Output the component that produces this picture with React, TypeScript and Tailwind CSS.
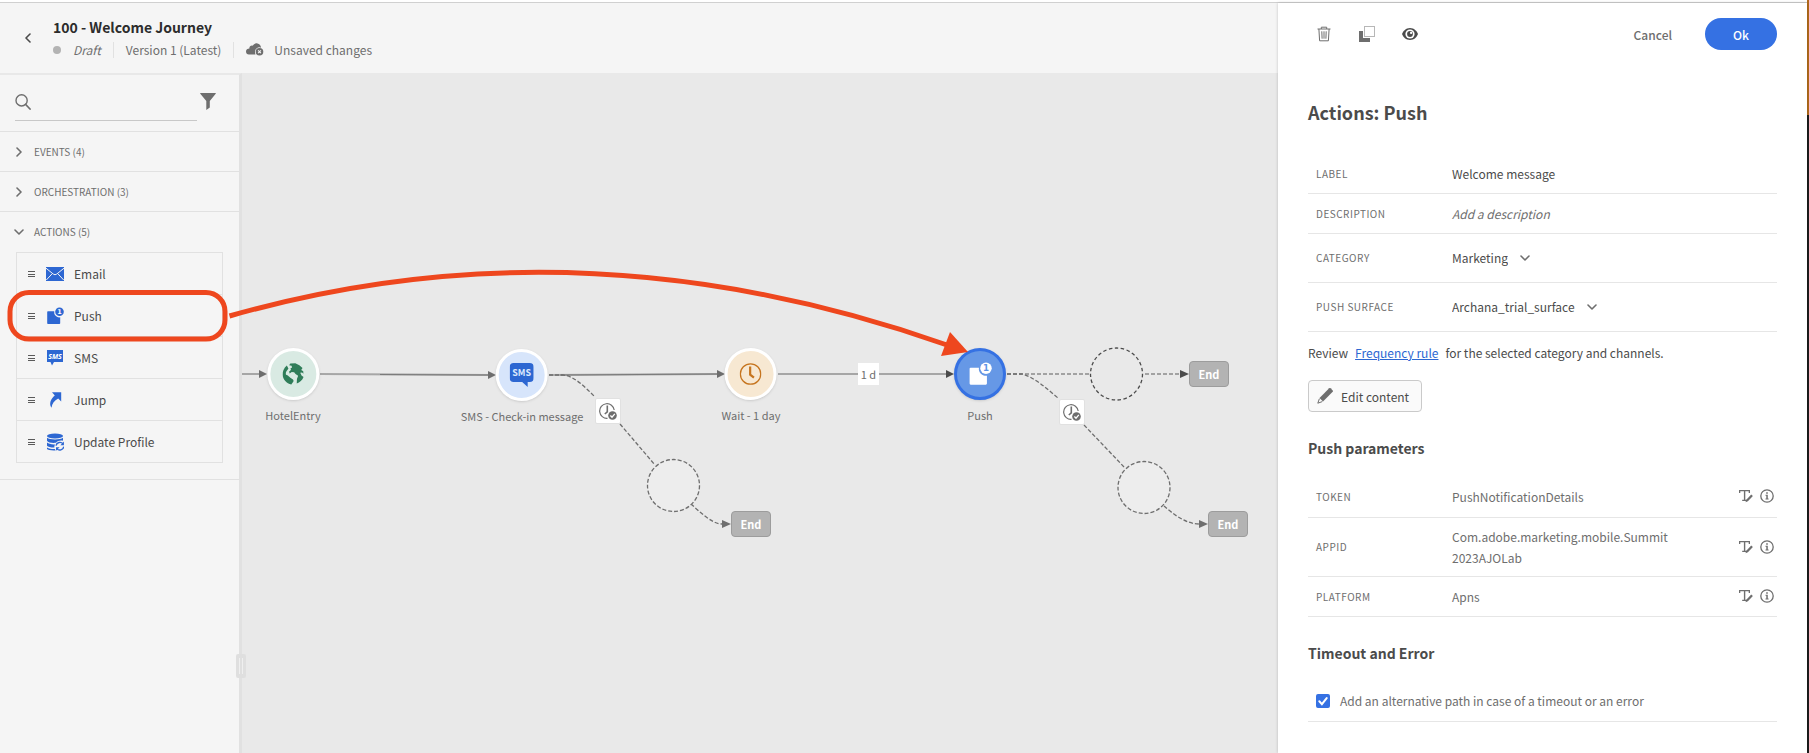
import React from "react";

type IconProps = { className?: string };

const Chevron = ({ className = "" }: IconProps) => (
  <svg viewBox="0 0 10 10" className={className} fill="none" stroke="currentColor" strokeWidth="1.6" strokeLinecap="round" strokeLinejoin="round" aria-hidden="true">
    <path d="M3 1 7 5 3 9" />
  </svg>
);

const ChevronDown = ({ className = "" }: IconProps) => (
  <svg viewBox="0 0 10 10" className={className} fill="none" stroke="currentColor" strokeWidth="1.6" strokeLinecap="round" strokeLinejoin="round" aria-hidden="true">
    <path d="M1 3 5 7 9 3" />
  </svg>
);

const SearchIcon = () => (
  <svg viewBox="0 0 16 16" className="size-4 text-[#6e6e6e]" fill="none" stroke="currentColor" strokeWidth="1.4" strokeLinecap="round" aria-hidden="true">
    <circle cx="6.6" cy="6.4" r="5.6" />
    <path d="M10.7 10.5 15 15" strokeWidth="1.8" />
  </svg>
);

const FilterIcon = () => (
  <svg viewBox="0 0 16 17" className="h-[17px] w-4 text-[#6e6e6e]" fill="currentColor" aria-hidden="true">
    <path d="M.6 0h14.8c.4 0 .6.5.3.8L9.800 8v6.600L6.300 17V8L.300.800C0 .500.200 0 .600 0Z" />
  </svg>
);

const CloudIcon = () => (
  <svg viewBox="0 0 18 13" className="h-[13px] w-[18px] text-[#6e6e6e]" fill="currentColor" aria-hidden="true">
    <path d="M9 9.2A4.4 4.4 0 0 1 15 4.700C15 2.500 13.600.800 11.400.400 9.500.100 7.600 1 6.700 2.700 5 2.200 3.200 3.500 3.400 5.400 1.500 5.400 0 6.600 0 8.400 0 10.200 1.200 11.400 2.800 11.400H9.500A5 5 0 0 1 9 9.200Z" />
    <circle cx="13.500" cy="8.800" r="3.800" />
    <path d="m12.100 7.400 2.800 2.800m0-2.800-2.800 2.800" stroke="#f5f5f5" strokeWidth="1.100" />
  </svg>
);

const EmailIcon = () => (
  <svg viewBox="0 0 18 14" className="h-[14px] w-[18px]" aria-hidden="true">
    <path fill="#2d67d2" d="M0 0h18v14H0z" />
    <path d="m0 1.200 7.300 5.900Q9 8.400 10.700 7.100L18 1.200M.3 13l5.600-6M17.700 13l-5.600-6" fill="none" stroke="#f5f5f5" strokeWidth="1" />
  </svg>
);

const PushIcon = ({ dark = true }: { dark?: boolean }) => (
  <svg viewBox="0 0 18 18" className={dark ? "size-[18px] overflow-visible" : "size-6 overflow-visible"} aria-hidden="true">
    <path fill={dark ? "#2d67d2" : "#ffffff"} d="M2 4.300h6.200a5.200 5.200 0 0 0 6 6v5.900a.8.800 0 0 1-.8.800H2a.8.800 0 0 1-.8-.8v-11a.8.800 0 0 1 .8-.9Z" />
    <circle cx="13.500" cy="4.700" r="4.300" fill={dark ? "#2d67d2" : "#ffffff"} />
    <text x="13.500" y="7.100" textAnchor="middle" fontSize="6.500" fontWeight="700" fontFamily="DejaVu Sans, sans-serif" fill={dark ? "#ffffff" : "#5f94e6"}>1</text>
  </svg>
);

const SmsIcon = () => (
  <svg viewBox="0 0 18 16" className="h-4 w-[18px]" aria-hidden="true">
    <path fill="#2d67d2" d="M1 0h16v12H8l-2 3.500L4.500 12H1z" />
    <text x="9" y="8.600" textAnchor="middle" fontSize="7" fontStyle="italic" fontWeight="700" fontFamily="Open Sans, sans-serif" fill="#ffffff">SMS</text>
  </svg>
);

const JumpIcon = () => (
  <svg viewBox="0 0 18 18" className="size-[18px]" fill="#2d67d2" aria-hidden="true">
    <path d="M6 1.200h9.200v9.300l-3-3C8.300 9.400 6.100 12.400 5.500 16.800 2.700 12.500 4.800 7.800 8.800 4.400Z" />
  </svg>
);

const ProfileIcon = () => (
  <svg viewBox="0 0 18 18" className="size-[18px]" aria-hidden="true">
    <g fill="#2d67d2">
      <ellipse cx="9" cy="3" rx="8" ry="2.500" />
      <path d="M1 4.800c2.500 2.300 13.500 2.300 16 0v3C14.500 7 11.500 8 10 9.800 6 10.200 2 9.500 1 7.700zM1 9.600c1.500 1.300 4.500 2 8 1.800-.6 1.300-.8 2-.6 3.200-3.400.1-6.400-.6-7.400-1.800zM1 14.400c2 1.200 4.800 1.600 7.800 1.500l.9 1.500C5.500 17.700 1.500 17 1 16z" />
    </g>
    <g fill="none" stroke="#2d67d2" strokeWidth="1.400">
      <path d="M10 12.600a4 4 0 0 1 7-1.800M17.800 13.600a4 4 0 0 1-7 2" />
    </g>
    <path fill="#2d67d2" d="M17.900 8.600v3.600h-3.500zM10 17.800v-3.600h3.600z" />
  </svg>
);

const TrashIcon = () => (
  <svg viewBox="0 0 14 16" className="h-4 w-[14px]" fill="none" stroke="currentColor" strokeWidth="1" aria-hidden="true">
    <path d="M.5 3h13M4.300 3V1.200h5.400V3M1.900 3l.7 11.800h8.800L12.100 3M4.800 5.300l.3 7.400M7 5.300v7.400M9.200 5.300l-.3 7.400" />
  </svg>
);

const DuplicateIcon = () => (
  <svg viewBox="0 0 16 16" className="size-4" aria-hidden="true">
    <path fill="currentColor" d="M0 5h4v7h7v4H0z" />
    <path d="M5.500.5h10v10h-10z" fill="none" stroke="currentColor" strokeDasharray="1 1" />
  </svg>
);

const EyeIcon = () => (
  <svg viewBox="0 0 16 12" className="h-3 w-4 text-[#4b4b4b]" aria-hidden="true">
    <path fill="currentColor" d="M8 0C4 0 1.100 3 0 6c1.100 3 4 6 8 6s6.900-3 8-6C14.900 3 12 0 8 0Z" />
    <circle cx="8" cy="6" r="4.600" fill="#ffffff" />
    <circle cx="8" cy="6" r="2.900" fill="currentColor" />
    <circle cx="9.100" cy="4.900" r="1.100" fill="#ffffff" />
  </svg>
);

const PencilIcon = () => (
  <svg viewBox="0 0 16 16" className="size-4 text-[#6e6e6e]" aria-hidden="true">
    <path fill="currentColor" d="M12.200.3a1 1 0 0 1 1.400 0l2.100 2.100a1 1 0 0 1 0 1.400L6 13.500 2.500 10z" />
    <path fill="none" stroke="currentColor" d="M2.400 10.700.8 15.200l4.500-1.600" />
  </svg>
);

const TextEditIcon = () => (
  <svg viewBox="0 0 14 14" className="size-[14px]" aria-hidden="true">
    <path fill="currentColor" d="M0 1h11v3H9.700V2.300H6.300v8.400H8V12H3.200v-1.300h1.700V2.300H1.300V4H0z" />
    <path fill="currentColor" d="m12.200 5.400 1.700 1.700-5 5.200-2.400.9.800-2.500z" />
  </svg>
);

const InfoIcon = () => (
  <svg viewBox="0 0 14 14" className="size-[14px]" aria-hidden="true">
    <circle cx="7" cy="7" r="6.200" fill="none" stroke="currentColor" strokeWidth="1.300" />
    <path fill="currentColor" d="M6.200 3.300h1.600v1.500H6.200zM5.500 5.800h2.300v3.600h.8v1H5.500v-1h.8V6.800h-.8z" />
  </svg>
);

const TimeoutIcon = () => (
  <svg viewBox="0 0 18 17" className="h-[17px] w-[18px] text-[#6e6e6e]" aria-hidden="true">
    <path d="M8.500 15.300A7.300 7.300 0 1 1 15.200 7" fill="none" stroke="currentColor" strokeWidth="1.200" />
    <path d="M8.300 2.500v6.300L5.800 11" fill="none" stroke="currentColor" strokeWidth="1.600" />
    <circle cx="13.500" cy="12.500" r="4.300" fill="currentColor" />
    <path d="m11.400 12.500 1.600 1.700 2.800-3.300" fill="none" stroke="#ffffff" strokeWidth="1.300" />
  </svg>
);

const GlobeIcon = () => (
  <svg viewBox="0 0 22 22" className="size-[22px]" fill="#2f7d59" aria-hidden="true">
    <path d="M4.500 2.500C1.500 5 0 8.500.3 12c.4 4.500 3.800 8.500 8.700 9.600.7-1.400 2.300-2.300 2.200-4-.2-1.800-2.800-2.200-4-3.600C6 12.600 5 12 3.600 11.700c-.8-2.500 1.300-4.300 2.500-6.200z" />
    <path d="M8 .6 6.800 2.300l2.400.5.600 1.700-1.600.8.400 1.700-1.800 1.400.5 2.100 2.100-1.600 2.400.3 1.400 1.800 2.600 1.700-1.200 3.200-.2 4.600c3-1 5.700-3.600 6.800-6.600l-2-1.500-1.300-2.600 1.800-.3 1.400 1.300-.2-2.600-2-1.200 1.300-1.900L17 2.200 13 .3z" />
  </svg>
);

const SmsBubble = () => (
  <svg viewBox="0 0 24 25" className="h-[25px] w-6" aria-hidden="true">
    <path fill="#2d67d2" d="M4 0h16a4 4 0 0 1 4 4v11a4 4 0 0 1-4 4h-2v5l-5.500-5H4a4 4 0 0 1-4-4V4a4 4 0 0 1 4-4Z" />
    <text x="12" y="13" textAnchor="middle" fontSize="9" fontWeight="700" fontFamily="Noto Sans CJK SC, sans-serif" fill="#dbe8fc">SMS</text>
  </svg>
);

const ClockIcon = () => (
  <svg viewBox="0 0 22 22" className="size-[22px]" fill="none" stroke="#c6751f" aria-hidden="true">
    <circle cx="11" cy="11" r="10.200" strokeWidth="1.300" />
    <path d="M10.600 3.500v8.200l3.800 3" strokeWidth="2.200" />
  </svg>
);

const palette = [
  { name: "Email", icon: <EmailIcon /> },
  { name: "Push", icon: <PushIcon /> },
  { name: "SMS", icon: <SmsIcon /> },
  { name: "Jump", icon: <JumpIcon /> },
  { name: "Update Profile", icon: <ProfileIcon /> },
];

function Section({ label, open = false }: { label: string; open?: boolean }) {
  return (
    <button type="button" aria-expanded={open} className="flex h-10 w-full items-center gap-[10px] border-t border-[#e1e1e1] pl-[14px] text-left text-[10px] text-[#6e6e6e]">
      {open ? <ChevronDown className="size-[10px]" /> : <Chevron className="size-[10px]" />}
      {label}
    </button>
  );
}

function Sidebar() {
  return (
    <aside className="relative w-[242px] shrink-0 border-t-2 border-r-[3px] border-t-[#e8e8e8] border-r-[#e1e1e1] bg-[#f5f5f5]">
      <div className="flex h-14 items-start gap-[3px] pl-[15px]">
        <label className="flex h-[46px] w-[182px] items-center border-b border-[#c8c8c8] pt-2">
          <SearchIcon />
          <input type="search" aria-label="Search activities" className="min-w-0 flex-1 bg-transparent px-2 text-[12px] outline-none" />
        </label>
        <button type="button" aria-label="Filter" className="pt-[18px]"><FilterIcon /></button>
      </div>
      <Section label="EVENTS (4)" />
      <Section label="ORCHESTRATION (3)" />
      <Section label="ACTIONS (5)" open />
      <ul className="mx-4 mt-px mb-4 border border-[#e1e1e1]">
        {palette.map(({ name, icon }) => (
          <li key={name} className="flex h-[42px] items-center border-b border-[#e1e1e1] pl-[11px] text-[12px] text-[#4b4b4b] last:h-[41px] last:border-b-0">
            <span className="flex w-[7px] flex-col gap-px">
              <i className="h-px bg-[#5a5a5a]" />
              <i className="mt-px h-px bg-[#5a5a5a]" />
              <i className="h-px bg-[#5a5a5a]" />
            </span>
            <span className="ml-[11px] flex w-[18px] justify-center">{icon}</span>
            <span className="ml-[10px]">{name}</span>
          </li>
        ))}
      </ul>
      <hr className="border-[#e1e1e1]" />
      <div className="absolute top-[579px] -right-[7px] z-10 flex h-6 w-[10px] justify-center gap-[2px] rounded-[2px] bg-[#dfdfdf] py-1">
        <i className="w-px bg-[#efefef]" />
        <i className="w-px bg-[#efefef]" />
      </div>
    </aside>
  );
}

function Node({ place, tone, label, children }: { place: string; tone: string; label: string; children: React.ReactNode }) {
  return (
    <div className={`absolute flex -translate-x-1/2 flex-col items-center gap-[3px] ${place}`}>
      <div className={`flex size-[52px] items-center justify-center rounded-full border-[3px] shadow-sm ${tone}`}>{children}</div>
      <span className="py-1 text-[11px] leading-4 whitespace-nowrap text-[#6e6e6e]">{label}</span>
    </div>
  );
}

const End = ({ place }: { place: string }) => (
  <div className={`absolute flex h-[26px] w-10 items-center justify-center rounded border border-[#9c9c9c] bg-[#b3b3b3] text-[11px] font-bold text-white ${place}`}>End</div>
);

const TimeoutBadge = ({ place }: { place: string }) => (
  <div className={`absolute flex size-[26px] items-center justify-center rounded-[2px] border border-[#e1e1e1] bg-white ${place}`}>
    <TimeoutIcon />
  </div>
);

function Canvas() {
  return (
    <main className="relative min-w-0 flex-1 overflow-hidden bg-[#e9e9e9]">
      <svg viewBox="242 73 1036 680" width="1036" height="680" className="absolute top-0 left-0 max-w-none" fill="none" aria-hidden="true">
        <g stroke="#a6a6a6" strokeWidth="2">
          <path d="M242 374h18M320 374l170 1M549 375l170-1M778 374h168" />
        </g>
        <g stroke="#7a7a7a" strokeWidth="1">
          <path d="M380 374.500l110 .5M560 375l160-1" />
        </g>
        <g stroke="#6e6e6e" strokeWidth="1.300" strokeDasharray="4 2">
          <path d="M549 375h14C574 376 584 386 595 397M620 424l35 41M691 504C700 512 712 524 722 524" />
          <path d="M1007 374h84M1145 374h36" strokeWidth="1.600" stroke="#8a8a8a" />
          <path d="M1007 374h15C1034 377 1046 388 1058 398M1084 425l41 43M1164 506C1173 514 1186 524 1199 524" />
          <circle cx="673.500" cy="485.500" r="26" fill="#ededed" />
          <circle cx="1144" cy="487.500" r="26" fill="#ededed" />
          <circle cx="1116.500" cy="374" r="26" stroke="#4b4b4b" strokeDasharray="3.500 2.500" />
        </g>
        <g fill="#6e6e6e">
          <path d="m259 370 8 4-8 4zM488 371l8 4-8 4zM717 370l8 4-8 4zM722 520l9 4-9 4zM1199 520l9 4-9 4z" />
          <path fill="#4b4b4b" d="m946 370 8 4-8 4zM1180 370l9 4-9 4z" />
        </g>
      </svg>
      <Node place="left-[51px] top-[275px]" tone="border-white bg-[#d9eae3]" label="HotelEntry"><GlobeIcon /></Node>
      <Node place="left-[280px] top-[276px]" tone="border-white bg-[#d7e5fb]" label="SMS - Check-in message"><SmsBubble /></Node>
      <Node place="left-[509px] top-[275px]" tone="border-white bg-[#f7e8d2]" label="Wait - 1 day"><ClockIcon /></Node>
      <Node place="left-[738px] top-[275px]" tone="border-[#3571e3] bg-[#6698e6]" label="Push"><PushIcon dark={false} /></Node>
      <span className="absolute top-[290px] left-[616px] flex h-[22px] w-[21px] items-center justify-center bg-white text-[11px] whitespace-nowrap text-[#6e6e6e]">1 d</span>
      <TimeoutBadge place="left-[353px] top-[325px]" />
      <TimeoutBadge place="left-[817px] top-[326px]" />
      <End place="left-[489px] top-[438px]" />
      <End place="left-[947px] top-[288px]" />
      <End place="left-[966px] top-[438px]" />
    </main>
  );
}

function Header() {
  return (
    <header className="flex h-[70px] items-center bg-[#f5f5f5]">
      <button type="button" aria-label="Back" className="mr-5 ml-[23px] text-[#4b4b4b]">
        <Chevron className="size-[10px] rotate-180" />
      </button>
      <div className="flex flex-col gap-[3px]">
        <h1 className="text-[14px] leading-5 font-bold text-[#2c2c2c]">100 - Welcome Journey</h1>
        <div className="flex h-5 items-center text-[12px] text-[#6e6e6e]">
          <i className="mr-3 size-2 rounded-full bg-[#b3b3b3]" />
          <em>Draft</em>
          <i className="mx-3 h-4 w-px bg-[#e1e1e1]" />
          <span>Version 1 (Latest)</span>
          <i className="mx-3 h-4 w-px bg-[#e1e1e1]" />
          <CloudIcon />
          <span className="ml-[10px]">Unsaved changes</span>
        </div>
      </div>
    </header>
  );
}

function Row({ label, height, children }: { label: string; height: string; children: React.ReactNode }) {
  return (
    <div className={`flex items-center border-b border-[#e6e6e6] pb-px pl-2 ${height}`}>
      <span className="w-[136px] shrink-0 text-[10px] tracking-wider text-[#6e6e6e]">{label}</span>
      {children}
    </div>
  );
}

const Picker = ({ label, value }: { label: string; value: string }) => (
  <span className="flex items-center gap-3 text-[#6e6e6e]">
    <select aria-label={label} defaultValue={value} className="appearance-none bg-transparent text-[#4b4b4b] outline-none">
      <option>{value}</option>
    </select>
    <ChevronDown className="size-[10px]" />
  </span>
);

const RowTools = () => (
  <span className="mr-[3px] ml-auto flex gap-[7px] text-[#6e6e6e]">
    <button type="button" aria-label="Edit expression"><TextEditIcon /></button>
    <button type="button" aria-label="Information"><InfoIcon /></button>
  </span>
);

function Panel() {
  return (
    <section className="z-10 flex w-[529px] shrink-0 flex-col bg-white px-[30px] text-[12px] leading-[21px] text-[#4b4b4b] shadow-[0_0_3px_rgba(0,0,0,0.2)]">
      <div className="flex h-[62px] items-center gap-[27px] pl-2 text-[#6e6e6e]">
        <button type="button" aria-label="Delete" className="flex w-4 justify-center"><TrashIcon /></button>
        <button type="button" aria-label="Duplicate"><DuplicateIcon /></button>
        <button type="button" aria-label="Preview"><EyeIcon /></button>
        <button type="button" className="mr-[6px] ml-auto font-medium">Cancel</button>
        <button type="button" className="h-8 w-[72px] rounded-full bg-[#3571e3] font-medium text-white">Ok</button>
      </div>
      <h2 className="pt-8 pb-[27px] text-[18px] leading-[30px] font-bold">Actions: Push</h2>
      <Row label="LABEL" height="h-10">Welcome message</Row>
      <Row label="DESCRIPTION" height="h-10"><em className="text-[#6e6e6e]">Add a description</em></Row>
      <Row label="CATEGORY" height="h-[49px]"><Picker label="Category" value="Marketing" /></Row>
      <Row label="PUSH SURFACE" height="h-[49px]"><Picker label="Push surface" value="Archana_trial_surface" /></Row>
      <p className="flex gap-[7px] pt-[10px]">
        <span>Review</span>
        <a href="#frequency" className="text-[#2d67d2] underline">Frequency rule</a>
        <span>for the selected category and channels.</span>
      </p>
      <button type="button" className="mt-[17px] flex h-8 w-[114px] items-center gap-2 rounded border border-[#cacaca] bg-[#fafafa] pl-2 whitespace-nowrap">
        <PencilIcon />
        Edit content
      </button>
      <h3 className="pt-[26px] pb-[17px] text-[14px] font-bold">Push parameters</h3>
      <div className="text-[#6e6e6e]">
        <Row label="TOKEN" height="h-[42px]">PushNotificationDetails<RowTools /></Row>
        <Row label="APPID" height="h-[59px]"><span>Com.adobe.marketing.mobile.Summit<br />2023AJOLab</span><RowTools /></Row>
        <Row label="PLATFORM" height="h-10">Apns<RowTools /></Row>
      </div>
      <h3 className="pt-[26px] pb-[17px] text-[14px] font-bold">Timeout and Error</h3>
      <label className="flex h-[41px] items-center gap-[10px] border-b border-[#e6e6e6] pb-px pl-2 text-[#6e6e6e]">
        <span className="relative flex">
          <input type="checkbox" defaultChecked className="size-[14px] appearance-none rounded-[2px] border-2 border-[#6e6e6e] bg-white checked:border-[#3571e3] checked:bg-[#3571e3]" />
          <svg viewBox="0 0 14 14" className="pointer-events-none absolute inset-0" fill="none" stroke="#ffffff" strokeWidth="2" strokeLinecap="round" aria-hidden="true">
            <path d="m3.300 7.300 2.600 2.800 4.800-6" />
          </svg>
        </span>
        Add an alternative path in case of a timeout or an error
      </label>
    </section>
  );
}

function Annotation() {
  return (
    <svg width="1000" height="380" viewBox="0 0 1000 380" className="pointer-events-none absolute top-0 left-0 z-20" fill="none" aria-hidden="true">
      <rect x="10" y="292.500" width="215" height="46.500" rx="19" stroke="#ee471e" strokeWidth="5" />
      <path d="M229.500 316Q580 216 947 345" stroke="#ee471e" strokeWidth="5" />
      <path d="M950 332 968 352 941 356Z" fill="#ee471e" />
    </svg>
  );
}

export default function App() {
  return (
    <div className="relative flex min-h-screen bg-white font-['Noto_Sans_CJK_SC',sans-serif]">
      <div className="flex min-w-0 flex-1 flex-col">
        <div className="h-[3px] shrink-0 border-b border-[#d0d0d0] bg-white" />
        <div className="flex min-h-0 flex-1">
          <div className="flex min-w-0 flex-1 flex-col">
            <Header />
            <div className="flex flex-1">
              <Sidebar />
              <Canvas />
            </div>
          </div>
          <Panel />
        </div>
      </div>
      <div className="flex w-[2px] shrink-0 flex-col bg-[#1c1c1c]">
        <i className="h-[115px] bg-[#b26a1b]" />
      </div>
      <Annotation />
    </div>
  );
}
